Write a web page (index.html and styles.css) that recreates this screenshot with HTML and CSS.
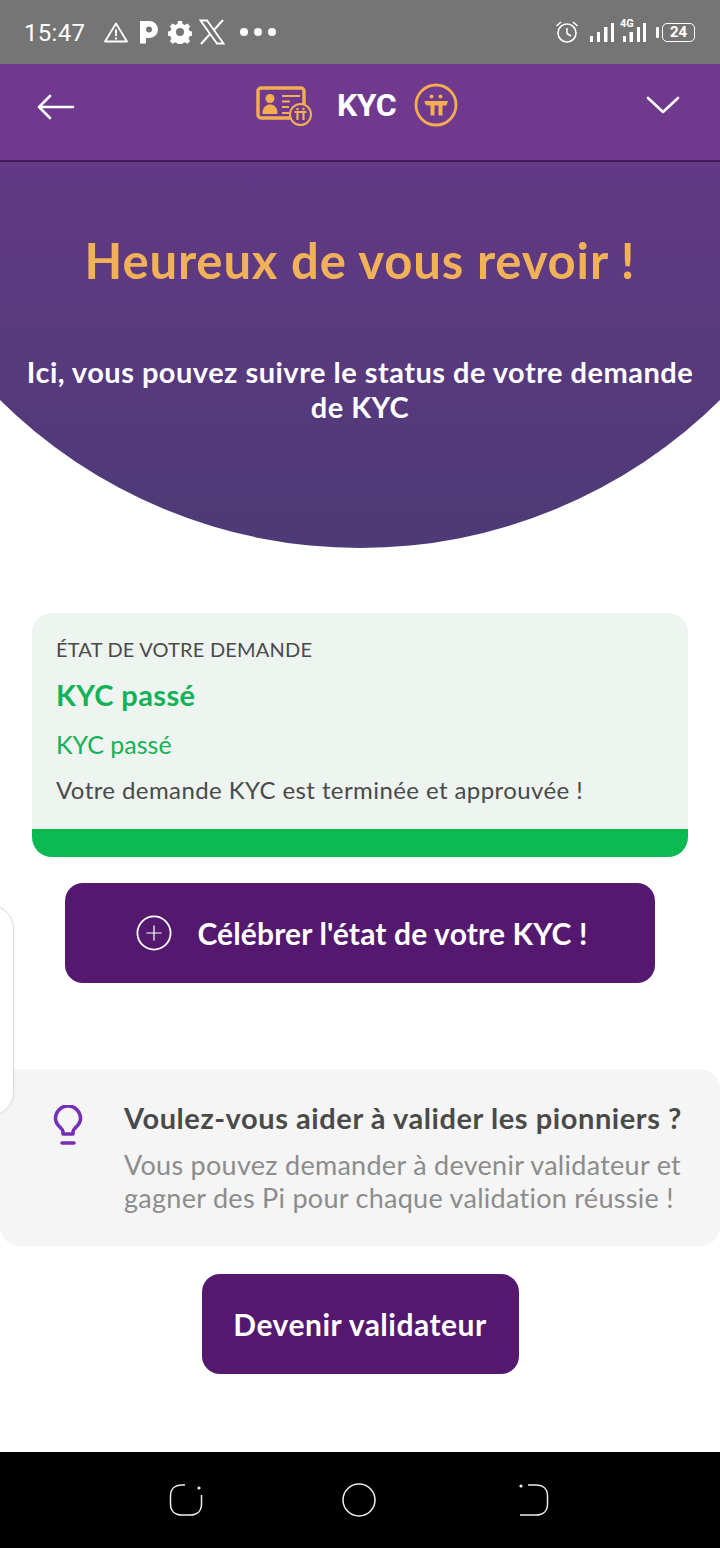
FILE: index.html
```html
<!DOCTYPE html>
<html lang="fr">
<head>
<meta charset="utf-8">
<title>KYC</title>
<link rel="stylesheet" href="styles.css">
</head>
<body>
<div class="phone">
  <div class="statusbar">
    <div class="status-left">
      <span class="time">15:47</span>
      <svg class="si-warn" width="26" height="24" viewBox="0 0 26 24"><path d="M13 3.500 2 21.500h22z" fill="none" stroke="#fff" stroke-width="1.800" stroke-linejoin="round"/><path d="M13 9.500v6.500M13 17.500v2" stroke="#fff" stroke-width="2"/></svg>
      <svg class="si-p" width="19" height="24" viewBox="0 0 19 24"><path d="M1 1h9.500a8.500 8.500 0 0 1 0 17H7v5.500H1z" fill="#fff"/><circle cx="10" cy="9.500" r="3" fill="#757575"/></svg>
      <svg class="si-gear" width="24" height="24" viewBox="0 0 24 24"><path d="M10 1h4l.6 3 2.200 1 2.600-1.600 2.800 2.800-1.600 2.600 1 2.200 3 .6v4l-3 .6-1 2.200 1.600 2.600-2.800 2.800-2.600-1.600-2.200 1-.6 3h-4l-.6-3-2.200-1-2.600 1.600-2.800-2.800 1.600-2.600-1-2.200-3-.6v-4l3-.6 1-2.200L1.800 6.200l2.800-2.800 2.600 1.600 2.200-1z" fill="#fff"/><circle cx="12" cy="12" r="4" fill="#757575"/></svg>
      <svg class="si-x" width="26" height="26" viewBox="0 0 26 26"><path d="M1.500 1.500h6.500l16.500 23h-6.500z" fill="none" stroke="#fff" stroke-width="1.800"/><path d="M24 1 14.500 11.500M11 15 2 25" stroke="#fff" stroke-width="2"/></svg>
      <span class="dots"><i></i><i></i><i></i></span>
    </div>
    <div class="status-right">
      <svg width="24" height="24" viewBox="0 0 24 24"><circle cx="12" cy="13" r="9" fill="none" stroke="#fff" stroke-width="1.600"/><path d="M12 8v5.500l4 2.500M1.500 6 6 2M22.500 6 18 2" fill="none" stroke="#fff" stroke-width="1.500"/></svg>
      <svg class="signal" width="58" height="32" viewBox="0 0 58 32"><path d="M0 20h3v6H0zM7 16h3v10H7zM14 11h3.500v15H14zM21 7h3v19h-3zM33 20h3v6h-3zM39.500 16h3.500v10h-3.500zM47 11h3v15h-3zM53 7h3v19h-3z" fill="#fff"/><text x="30" y="11" class="fourg">4G</text></svg>
      <span class="batt"><i class="nub"></i><span class="cell">24</span></span>
    </div>
  </div>

  <header class="appbar">
    <svg class="back" width="38" height="28" viewBox="0 0 38 28"><path d="M36 14H2M13 3 2 14l11 11" fill="none" stroke="#fff" stroke-width="2.600" stroke-linecap="round" stroke-linejoin="round"/></svg>
    <div class="title">
      <svg class="idcard" width="58" height="42" viewBox="0 0 58 42">
        <rect x="2" y="2" width="46" height="30" rx="3" fill="none" stroke="#f5ae4f" stroke-width="3.400"/>
        <circle cx="14" cy="12.500" r="4.500" fill="#f5ae4f"/>
        <path d="M6.500 28c0-7 3.500-9.500 7.500-9.500s7.500 2.500 7.500 9.500z" fill="#f5ae4f"/>
        <path d="M26 10h18M26 15.500h8M26 21h7M26 27h7" stroke="#f5ae4f" stroke-width="2"/>
        <circle cx="44.500" cy="28.500" r="10.500" fill="#6f3a8e" stroke="#f5ae4f" stroke-width="2"/>
        <circle cx="41.500" cy="23" r="1.300" fill="#f5ae4f"/><circle cx="47.500" cy="23" r="1.300" fill="#f5ae4f"/>
        <path d="M38.500 26h12M41.500 26v8M47.500 26v8" fill="none" stroke="#f5ae4f" stroke-width="2.200"/>
      </svg>
      <span class="kyc">KYC</span>
      <svg class="pi" width="44" height="44" viewBox="0 0 44 44">
        <circle cx="22" cy="22" r="20" fill="none" stroke="#f5ae4f" stroke-width="2.800"/>
        <circle cx="17.500" cy="13.500" r="2" fill="#f5ae4f"/><circle cx="26.500" cy="13.500" r="2" fill="#f5ae4f"/>
        <path d="M11 18h23l-1.500 4.500h-4v10h-4v-10h-4v10h-4v-10h-2.500c-2 0-3.500-1.500-3.500-4.500z" fill="#f5ae4f"/>
      </svg>
    </div>
    <svg class="chev" width="34" height="20" viewBox="0 0 34 20"><path d="M2 3l15 14L32 3" fill="none" stroke="#fff" stroke-width="2.600" stroke-linecap="round" stroke-linejoin="round"/></svg>
  </header>

  <section class="hero">
    <h1>Heureux de vous revoir !</h1>
    <p>Ici, vous pouvez suivre le status de votre demande de KYC</p>
  </section>

  <section class="status-card">
    <div class="status-body">
      <div class="label">ÉTAT DE VOTRE DEMANDE</div>
      <div class="state">KYC passé</div>
      <div class="substate">KYC passé</div>
      <div class="desc">Votre demande KYC est terminée et approuvée !</div>
    </div>
    <div class="status-bar"></div>
  </section>

  <div class="celebrate-wrap">
    <button class="btn btn-wide">
      <svg width="36" height="36" viewBox="0 0 38 38"><circle cx="19" cy="19" r="17.500" fill="none" stroke="#fff" stroke-width="1.900"/><path d="M19 11v16M11 19h16" stroke="#fff" stroke-width="1.300"/></svg>
      <span>Célébrer l'état de votre KYC !</span>
    </button>
  </div>

  <section class="validator">
    <svg class="bulb" width="32" height="42" viewBox="0 0 32 42"><path d="M11 29v-2.500C11 23 3.500 21 3.500 13.500a12.500 12.500 0 0 1 25 0C28.500 21 21 23 21 26.500V29z" fill="none" stroke="#7530b8" stroke-width="3.600" stroke-linejoin="round"/><path d="M10 38h12" stroke="#7530b8" stroke-width="3.600" stroke-linecap="round"/></svg>
    <div class="validator-text">
      <h2>Voulez-vous aider à valider les pionniers ?</h2>
      <p>Vous pouvez demander à devenir validateur et gagner des Pi pour chaque validation réussie !</p>
    </div>
  </section>

  <div class="become-wrap">
    <button class="btn btn-narrow">Devenir validateur</button>
  </div>

  <div class="spacer"></div>

  <nav class="navbar">
    <svg width="34" height="34" viewBox="0 0 34 34"><path d="M16 2h-3C6 2 1.500 6 1.500 13v8c0 7 4.500 11 11.500 11h8c7 0 11.500-4 11.500-11v-9" fill="none" stroke="#eee" stroke-width="1.500"/><circle cx="30" cy="5" r="1.600" fill="#eee"/></svg>
    <svg width="34" height="34" viewBox="0 0 34 34"><circle cx="17" cy="17" r="16" fill="none" stroke="#eee" stroke-width="1.500"/></svg>
    <svg width="34" height="34" viewBox="0 0 34 34"><path d="M13 2h8c7 0 11.500 4 11.500 11v8c0 7-4.500 11-11.500 11H5" fill="none" stroke="#eee" stroke-width="1.500"/><circle cx="6" cy="3" r="1.600" fill="#eee"/></svg>
  </nav>

  <aside class="side-tab"></aside>
</div>
</body>
</html>
```
FILE: styles.css
```css
* { box-sizing: border-box; }
html, body { margin: 0; padding: 0; background: #fff; }
.phone {
  position: relative;
  width: 720px;
  height: 1548px;
  display: flex;
  flex-direction: column;
  overflow: hidden;
  font-family: "Lato", "Noto Sans", sans-serif;
  color: #4a4a4a;
}
.statusbar {
  height: 64px;
  flex: none;
  background: #757575;
  display: flex;
  align-items: center;
  justify-content: space-between;
  padding: 0 25px;
}
.status-left, .status-right { display: flex; align-items: center; }
.time {
  font-family: "Roboto", sans-serif;
  font-size: 24px;
  color: #fff;
  letter-spacing: .3px;
  width: 79px;
  margin: 1px 0 0 -1px;
}
.si-p { margin-left: 10px; }
.si-gear { margin-left: 10px; }
.si-x { margin-left: 7px; }
.dots { display: flex; gap: 6px; margin-left: 15px; }
.dots i { width: 8px; height: 8px; border-radius: 50%; background: #fff; }
.status-right { gap: 11px; }
.signal { margin-right: -3px; }
.fourg { font-family: "Roboto", sans-serif; font-size: 11px; font-weight: 700; fill: #fff; }
.batt { display: flex; align-items: center; gap: 3px; }
.nub { width: 3px; height: 11px; background: #fff; border-radius: 1px; }
.cell {
  width: 33px; height: 19px;
  border: 1.500px solid #fff;
  border-radius: 5px;
  color: #fff;
  font: 700 15px/16px "Roboto", sans-serif;
  text-align: center;
}
.appbar {
  height: 98px;
  flex: none;
  background: #6f3a8e;
  border-bottom: 2px solid #41195c;
  display: flex;
  align-items: center;
  justify-content: space-between;
  padding: 0 40px 11px 37px;
  position: relative;
}
.chev { margin-top: -4px; }
.title {
  position: absolute;
  left: 256px;
  top: 18px;
  display: flex;
  align-items: center;
}
.idcard { align-self: flex-start; margin-top: 4px; }
.kyc {
  font-family: "Roboto", sans-serif;
  font-weight: 700;
  font-size: 32px;
  letter-spacing: -.5px;
  color: #fff;
  margin: 0 18px 0 23px;
}
.hero {
  height: 386px;
  flex: none;
  background: linear-gradient(180deg, #633985 0%, #4d3a76 100%);
  clip-path: circle(512px at 50% -126px);
  text-align: center;
  color: #fff;
  padding: 68px 20px 0;
}
.hero h1 {
  margin: 0;
  font-size: 49px;
  line-height: 60px;
  font-weight: 700;
  color: #f0b159;
  letter-spacing: .85px;
}
.hero p {
  margin: 64px 0 0;
  font-size: 29px;
  line-height: 35px;
  font-weight: 700;
  letter-spacing: .48px;
}
.status-card {
  margin: 65px 32px 0;
  height: 244px;
  flex: none;
  border-radius: 20px;
  background: #eef4ef;
  overflow: hidden;
  display: flex;
  flex-direction: column;
}
.status-body { flex: 1; padding: 21px 24px 0; }
.label { font-size: 20px; line-height: 30px; color: #4a4a4a; letter-spacing: .2px; }
.state { margin-top: 14px; font-size: 29px; line-height: 34px; font-weight: 700; color: #12b257; letter-spacing: .4px; }
.substate { margin-top: 17px; font-size: 25px; line-height: 30px; color: #12b257; }
.desc { margin-top: 16px; font-size: 24px; line-height: 30px; color: #4a4a4a; letter-spacing: .41px; white-space: nowrap; }
.status-bar { height: 28px; flex: none; background: #0bba50; }
.celebrate-wrap, .become-wrap { display: flex; justify-content: center; flex: none; }
.celebrate-wrap { margin-top: 26px; }
.btn {
  height: 100px;
  border: 0;
  border-radius: 18px;
  background: #54186e;
  color: #fff;
  font-family: inherit;
  font-size: 30px;
  font-weight: 700;
  display: flex;
  align-items: center;
  justify-content: center;
  gap: 25px;
  padding: 0 0 1px;
}
.btn-wide { width: 590px; letter-spacing: .15px; padding-left: 4px; }
.btn-narrow { width: 317px; letter-spacing: .5px; }
.validator {
  margin-top: 86px;
  height: 177px;
  flex: none;
  background: #f5f5f5;
  border-radius: 20px;
  display: flex;
  padding: 32px 30px 0 52px;
  gap: 40px;
}
.bulb { flex: none; margin-top: 4px; }
.validator-text h2 { margin: 0; font-size: 29px; line-height: 34px; font-weight: 700; color: #4a4a4a; white-space: nowrap; letter-spacing: .57px; }
.validator-text p { margin: 13px 0 0; font-size: 27px; line-height: 33px; color: #8c8c8c; letter-spacing: .28px; }
.become-wrap { margin-top: 28px; }
.spacer { flex: 1; }
.navbar {
  height: 96px;
  flex: none;
  background: #000;
  display: flex;
  align-items: center;
  justify-content: space-between;
  padding: 0 171px 0 169px;
}
.side-tab {
  position: absolute;
  left: -40px;
  top: 905px;
  width: 54px;
  height: 211px;
  background: #fff;
  border: 1px solid #dedede;
  border-radius: 24px;
  box-shadow: 0 0 3px rgba(0,0,0,.08);
}
```
